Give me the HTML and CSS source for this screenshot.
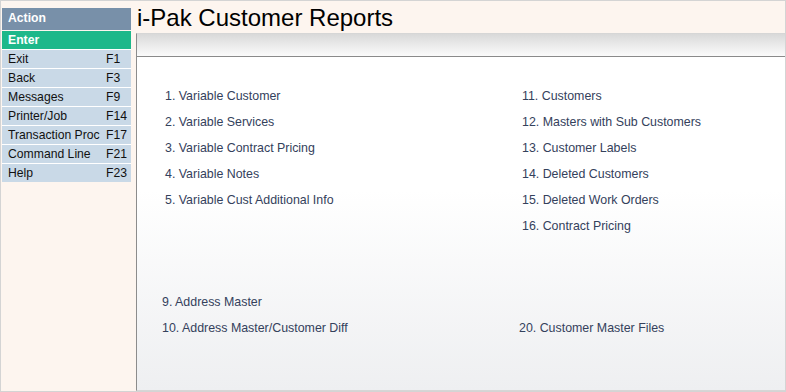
FILE: index.html
```html
<!DOCTYPE html>
<html lang="en">
<head>
    <meta charset="UTF-8">
    <title>i-Pak Customer Reports</title>
    <link rel="stylesheet" href="styles.css">
</head>
<body>
    <div class="frame">
        <div class="sidebar">
            <div class="action-title">Action</div>
            <div class="action-enter">Enter</div>
            <div class="action-row"><span>Exit</span><span class="key">F1</span></div>
            <div class="action-row"><span>Back</span><span class="key">F3</span></div>
            <div class="action-row"><span>Messages</span><span class="key">F9</span></div>
            <div class="action-row"><span>Printer/Job</span><span class="key">F14</span></div>
            <div class="action-row"><span>Transaction Proc</span><span class="key">F17</span></div>
            <div class="action-row"><span>Command Line</span><span class="key">F21</span></div>
            <div class="action-row"><span>Help</span><span class="key">F23</span></div>
        </div>
        <div class="main">
            <h1 class="page-title">i-Pak Customer Reports</h1>
            <div class="panel">
                <div class="panel-head"></div>
                <div class="panel-body">
                    <div class="menu-grid">
                        <div class="menu-col">
                            <a href="#">1. Variable Customer</a>
                            <a href="#">2. Variable Services</a>
                            <a href="#">3. Variable Contract Pricing</a>
                            <a href="#">4. Variable Notes</a>
                            <a href="#">5. Variable Cust Additional Info</a>
                        </div>
                        <div class="menu-col">
                            <a href="#">11. Customers</a>
                            <a href="#">12. Masters with Sub Customers</a>
                            <a href="#">13. Customer Labels</a>
                            <a href="#">14. Deleted Customers</a>
                            <a href="#">15. Deleted Work Orders</a>
                            <a href="#">16. Contract Pricing</a>
                        </div>
                    </div>
                    <div class="menu-grid lower">
                        <div class="menu-col">
                            <a href="#">9. Address Master</a>
                            <a href="#">10. Address Master/Customer Diff</a>
                        </div>
                        <div class="menu-col">
                            <span class="spacer"></span>
                            <a href="#">20. Customer Master Files</a>
                        </div>
                    </div>
                </div>
            </div>
        </div>
    </div>
</body>
</html>
```

FILE: styles.css
```css
body {
    margin: 0;
    font-family: "Liberation Sans", Arial, sans-serif;
}
.frame {
    width: 786px;
    height: 392px;
    box-sizing: border-box;
    border: 1px solid #d4d4d4;
    background-color: #fdf5ef;
    display: flex;
}
.sidebar {
    width: 129px;
    margin-left: 1px;
    padding-top: 7px;
    font-size: 12.2px;
}
.action-title {
    background-color: #7890a9;
    color: white;
    font-weight: bold;
    height: 22px;
    line-height: 20px;
    padding-left: 6px;
    margin-bottom: 1px;
}
.action-enter {
    background-color: #1db88a;
    color: white;
    font-weight: bold;
    height: 18px;
    line-height: 19px;
    padding-left: 6px;
}
.action-row {
    background-color: #c9d9e7;
    color: #111;
    height: 18px;
    line-height: 19px;
    padding-left: 6px;
    border-top: 1px solid #fff;
    display: flex;
}
.action-row span:first-child {
    width: 98px;
    white-space: nowrap;
}
.main {
    flex: 1;
    display: flex;
    flex-direction: column;
    margin-left: 5px;
}
.page-title {
    margin: 0;
    height: 32px;
    font-size: 24px;
    font-weight: normal;
    color: #000;
    line-height: 34px;
    padding-left: 1px;
}
.panel {
    flex: 1;
    border-left: 1px solid #8c8c8c;
    border-top: 1px solid #d6d6d6;
    border-bottom: 1px solid #d6d6d6;
    display: flex;
    flex-direction: column;
}
.panel-head {
    height: 22px;
    background: linear-gradient(#d9d9d9, #fbfbfb);
    border-bottom: 1px solid #8a8a8a;
}
.panel-body {
    flex: 1;
    background: linear-gradient(#ffffff 40%, #eeeff1);
    padding-top: 26px;
}
.menu-grid {
    display: grid;
    grid-template-columns: 357px 1fr;
    padding-left: 28px;
}
.menu-grid.lower {
    padding-left: 25px;
    margin-top: 50px;
}
.menu-col {
    display: flex;
    flex-direction: column;
}
.menu-col a,
.menu-col .spacer {
    height: 26px;
    line-height: 26px;
    font-size: 12.4px;
    color: #34415c;
    text-decoration: none;
    white-space: nowrap;
}
```
